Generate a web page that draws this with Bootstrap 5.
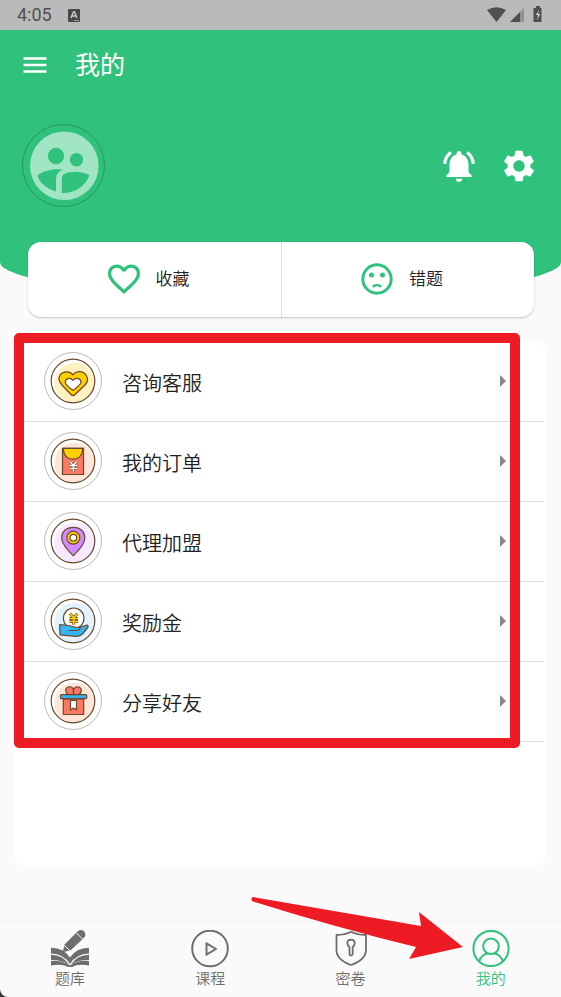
<!DOCTYPE html>
<html lang="zh-CN">
<head>
<meta charset="utf-8">
<meta name="viewport" content="width=device-width, initial-scale=1">
<title>我的</title>
<link href="https://cdn.jsdelivr.net/npm/bootstrap@5.3.0/dist/css/bootstrap.min.css" rel="stylesheet">
<style>
  :root { --brand: #30c27c; --ink: #222; --muted: #6e6e6e; --note: #ed1c24; }
  body { background: #33333b; color: var(--ink); font-family: Roboto, "Noto Sans CJK SC", sans-serif; }
  svg { display: block; flex: none; }
  .screen { background: #fafafa; border-bottom-left-radius: 8px; }
  .status-bar { background: #bababa; color: #505050; height: 30px; padding: 0 17px; font-size: 18px; line-height: 30px; }
  .hero { background: var(--brand); height: 267px; border-radius: 0 0 50% 50% / 0 0 35px 35px; }
  .toolbar { height: 70px; padding-left: 22px; gap: 27px; }
  .toolbar h1 { font-size: 25px; line-height: 36px; padding-top: 2px; }
  .profile { margin-top: 24px; padding: 0 23px 0 22px; }
  .profile-actions { gap: 22px; }
  .plain-btn { background: none; border: 0; padding: 0; color: #fff; }
  .shortcuts { margin: -55px 27px 0 28px; height: 75px; border-radius: 13px; box-shadow: 0 1px 2px rgba(0, 0, 0, .22); }
  .shortcuts a { gap: 16px; padding: 0 12px 2px 0; font-size: 17px; font-weight: 350; color: var(--ink); }
  .shortcuts span { padding-top: 3px; }
  .shortcuts a + a { border-left: 1px solid #dedede; }
  .shortcuts svg { color: var(--brand); }
  .menu-card { margin: 24px 14px 55px; border-radius: 14px; padding-top: 1px; }
  .menu-card .list-group { margin-right: 3px; }
  .menu-card .list-group-item { height: 80px; padding: 0 38px 2px 30px; gap: 20px; font-size: 20px; font-weight: 350; color: var(--ink); background: none; border-width: 0 0 1px; border-color: #dedede; }
  .menu-card .list-group-item:last-child { border-bottom-width: 1px; }
  .menu-label { padding-top: 6px; }
  .note-frame { position: absolute; inset: -9px 27px -6px 0; border: 10px solid var(--note); border-radius: 5px; pointer-events: none; z-index: 3; }
  .tab-bar { height: 76px; padding-top: 8px; border-top: 1px solid #f0f0f0; }
  .tab-bar a { font-size: 15px; line-height: 22px; font-weight: 350; color: var(--muted); }
  .tab-bar a.active { color: var(--brand); }
  .note-arrow { position: absolute; right: 98px; bottom: 36px; pointer-events: none; }
</style>
<script src="https://cdn.jsdelivr.net/npm/bootstrap@5.3.0/dist/js/bootstrap.bundle.min.js"></script>
</head>
<body>
<div class="screen min-vh-100 d-flex flex-column">
  <div class="status-bar d-flex align-items-center">
    <span>4:05</span>
    <svg class="ms-3" width="12" height="13" viewBox="0 0 12 13"><rect width="12" height="13" rx="1" fill="#484848"/><path d="M3 9 5.4 3h1.2L9 9M4 7h4" fill="none" stroke="#ccc" stroke-width="1.4"/><path d="M6 11.5h5" stroke="#999"/></svg>
    <svg class="ms-auto" width="57" height="18" viewBox="0 0 57 18" fill="#505050"><path d="M0 4Q9.500-1.500 19 4L9.500 16Z"/><path d="M37 2v14H23Z" fill="#929292"/><path d="M33 6v10H23Z"/><path d="M49 0h4v2h1.500v14h-8V2H49Z"/><path d="M52 4l-3 5h2l-1 5 3-6h-2Z" fill="#ddd"/></svg>
  </div>

  <header class="hero">
    <div class="toolbar d-flex align-items-center">
      <button class="plain-btn" type="button" aria-label="菜单"><svg width="26" height="18" viewBox="0 0 26 18"><path d="M1.500 2.500h23M1.500 9h23M1.500 15.500h23" stroke="currentColor" stroke-width="2.300"/></svg></button>
      <h1 class="m-0 fw-normal text-white">我的</h1>
    </div>
    <div class="profile d-flex align-items-center justify-content-between">
      <button class="plain-btn" type="button" aria-label="头像">
        <svg width="83" height="83" viewBox="0 0 83 83"><circle cx="41.500" cy="41.500" r="41" fill="none" stroke="#228b59" stroke-width=".8"/><circle cx="42.300" cy="41.800" r="34.300" fill="#a2e5c5"/><g fill="#30c27c"><circle cx="34" cy="32" r="8.200"/><circle cx="54.500" cy="35.700" r="6.700"/><path d="M15.500 51.500C20 46.500 35 44 41 45.800C36 47.500 34 51 34 56V67.600C24 64.500 17 58 15.500 51.500Z"/><path d="M39.800 69V55C39.800 50 43 48 54 47.700C60 48 64 49.500 67.500 51C64 61 54 69.500 39.800 69Z"/></g></svg>
      </button>
      <div class="profile-actions d-flex">
        <button class="plain-btn" type="button" aria-label="通知"><svg width="38" height="38" viewBox="0 0 24 24" fill="currentColor"><path d="M7.580 4.080L6.150 2.650C3.750 4.480 2.170 7.300 2.030 10.500h2c.15-2.650 1.510-4.970 3.550-6.420zm12.390 6.420h2c-.15-3.200-1.730-6.020-4.120-7.850l-1.420 1.430c2.020 1.450 3.390 3.770 3.540 6.420zM18 11c0-3.070-1.640-5.640-4.500-6.320V4c0-.83-.67-1.500-1.500-1.500s-1.500.67-1.500 1.500v.68C7.630 5.360 6 7.920 6 11v5l-2 2v1h16v-1l-2-2v-5zm-6 11c.14 0 .27-.01.4-.04.65-.14 1.180-.58 1.440-1.180.1-.24.15-.5.15-.78h-4c.01 1.100.9 2 2.010 2z"/></svg></button>
        <button class="plain-btn" type="button" aria-label="设置"><svg width="38" height="38" viewBox="0 0 24 24" fill="currentColor"><path d="M19.140 12.940c.04-.3.06-.61.06-.94 0-.32-.02-.64-.07-.94l2.030-1.580c.18-.14.23-.41.12-.61l-1.920-3.320c-.12-.22-.37-.29-.59-.22l-2.390.96c-.5-.38-1.030-.7-1.620-.94l-.36-2.540c-.04-.24-.24-.41-.48-.41h-3.840c-.24 0-.43.17-.47.41l-.36 2.540c-.59.24-1.130.57-1.620.94l-2.390-.96c-.22-.08-.47 0-.59.22L2.740 8.870c-.12.21-.08.47.12.61l2.030 1.580c-.05.3-.09.63-.09.94s.02.64.07.94l-2.030 1.580c-.18.14-.23.41-.12.61l1.920 3.320c.12.22.37.29.59.22l2.390-.96c.5.38 1.030.7 1.620.94l.36 2.540c.05.24.24.41.48.41h3.840c.24 0 .44-.17.47-.41l.36-2.540c.59-.24 1.130-.56 1.620-.94l2.390.96c.22.08.47 0 .59-.22l1.920-3.320c.12-.22.07-.47-.12-.61l-2.010-1.580zM12 15.600c-1.980 0-3.600-1.620-3.600-3.600s1.620-3.600 3.600-3.600 3.600 1.620 3.600 3.600-1.620 3.600-3.600 3.600z"/></svg></button>
      </div>
    </div>
  </header>

  <nav class="shortcuts d-flex bg-white" aria-label="快捷入口">
    <a href="#fav" class="flex-fill w-50 d-flex align-items-center justify-content-center text-decoration-none">
      <svg width="32" height="32" viewBox="2 2 20 20" fill="currentColor"><path d="M16.500 3c-1.740 0-3.410.81-4.500 2.090C10.910 3.810 9.240 3 7.500 3 4.420 3 2 5.420 2 8.500c0 3.780 3.400 6.860 8.550 11.540L12 21.350l1.450-1.320C18.600 15.360 22 12.280 22 8.500 22 5.420 19.580 3 16.500 3zm-4.400 15.550l-.1.1-.1-.1C7.140 14.240 4 11.390 4 8.500 4 6.500 5.500 5 7.500 5c1.540 0 3.040.99 3.570 2.360h1.870C13.460 5.990 14.960 5 16.500 5c2 0 3.500 1.500 3.500 3.500 0 2.890-3.140 5.740-7.900 10.050z"/></svg>
      <span>收藏</span>
    </a>
    <a href="#wrong" class="flex-fill w-50 d-flex align-items-center justify-content-center text-decoration-none">
      <svg width="32" height="32" viewBox="0 0 32 32"><circle cx="16" cy="16" r="14.200" fill="none" stroke="currentColor" stroke-width="3"/><circle cx="10.500" cy="12" r="2.500" fill="currentColor"/><circle cx="21.500" cy="12" r="2.500" fill="currentColor"/><path d="M12.500 23.200Q16 21 19.500 23.200" fill="none" stroke="currentColor" stroke-width="2.400" stroke-linecap="round"/></svg>
      <span>错题</span>
    </a>
  </nav>

  <main class="menu-card bg-white flex-grow-1">
    <div class="position-relative">
      <div class="list-group list-group-flush">
        <a href="#service" class="list-group-item d-flex align-items-center">
          <svg width="58" height="58" viewBox="0 0 58 58"><circle cx="29" cy="29" r="28.500" fill="none" stroke="#999" stroke-width=".7"/><circle cx="30.500" cy="30.700" r="20" fill="#fff1c1"/><g stroke="#67492c" stroke-width="1.200" stroke-linejoin="round"><circle cx="29" cy="29" r="21.800" fill="none"/><path d="M29 23C26 18.500 19 19 16 23C14 27 15 30 18 33L27 42.500Q29 44.500 31 42.500L41 33C44 30 44 26 42 23C39 18.500 32 18.500 29 23Z" fill="#ffd000"/><path d="M29 28.300C26 24.500 21 27 21.300 30.500C21.500 33 25 35.500 29 38.500C33 35.500 36.500 33 37 30.500C37.500 27 32 24.500 29 28.300Z" fill="#fff"/></g></svg>
          <span class="menu-label">咨询客服</span>
          <svg class="ms-auto" width="6" height="12" viewBox="0 0 6 12"><path d="M0 0 6 6 0 12Z" fill="#888"/></svg>
        </a>
        <a href="#orders" class="list-group-item d-flex align-items-center">
          <svg width="58" height="58" viewBox="0 0 58 58"><circle cx="29" cy="29" r="28.500" fill="none" stroke="#999" stroke-width=".7"/><circle cx="30.500" cy="30.700" r="20" fill="#ffe5d8"/><g stroke="#67492c" stroke-width="1.200"><circle cx="29" cy="29" r="21.800" fill="none"/><path d="M18.500 16.300h21v26.200h-21Z" fill="#fa7864"/><path d="M19.500 16.300h19v2.500C37.500 30 20.500 30 19.500 18.800Z" fill="#ffd000"/></g><g fill="none"><path d="M26 29.500l3.300 4 3.300-4M25.500 33.500h7.600M25.500 36.300h7.600M29.300 33.500V39.500" stroke="#67492c" stroke-width="2.400"/><path d="M26 29.500l3.300 4 3.300-4M25.500 33.500h7.600M25.500 36.300h7.600M29.300 33.500V39.500" stroke="#fff" stroke-width="1.300"/></g></svg>
          <span class="menu-label">我的订单</span>
          <svg class="ms-auto" width="6" height="12" viewBox="0 0 6 12"><path d="M0 0 6 6 0 12Z" fill="#888"/></svg>
        </a>
        <a href="#agent" class="list-group-item d-flex align-items-center">
          <svg width="58" height="58" viewBox="0 0 58 58"><circle cx="29" cy="29" r="28.500" fill="none" stroke="#999" stroke-width=".7"/><circle cx="30.500" cy="30.700" r="20" fill="#f8e8ff"/><g stroke="#67492c" stroke-width="1.200" stroke-linejoin="round"><circle cx="29" cy="29" r="21.800" fill="none"/><path d="M29.300 43.800C25 39.500 18 33 17.700 26.500C17.500 19.500 22.500 15.300 29.300 15.300S41 19.500 40.800 26.500C40.500 33 33.500 39.500 29.300 43.800Z" fill="#d18aff"/><circle cx="29.300" cy="25.700" r="6.500" fill="#ffd000"/><circle cx="29.300" cy="25.700" r="3.300" fill="#fff"/></g></svg>
          <span class="menu-label">代理加盟</span>
          <svg class="ms-auto" width="6" height="12" viewBox="0 0 6 12"><path d="M0 0 6 6 0 12Z" fill="#888"/></svg>
        </a>
        <a href="#bonus" class="list-group-item d-flex align-items-center">
          <svg width="58" height="58" viewBox="0 0 58 58"><circle cx="29" cy="29" r="28.500" fill="none" stroke="#999" stroke-width=".7"/><circle cx="30.500" cy="30.700" r="20" fill="#e3f2ff"/><g stroke="#67492c" stroke-width="1.200" stroke-linejoin="round"><circle cx="29" cy="29" r="21.800" fill="none"/><circle cx="29.700" cy="26.300" r="10.300" fill="#fff"/><path d="M15.600 32.500L25 33.500Q29 35 35 35.500L43 33.200Q45 33.500 43.500 36L38.500 42Q36 44.500 32 44.300L16 42.800Z" fill="#35b4f5"/><path d="M24.500 38.500H32Q36 38.500 36.500 35.500" fill="none"/></g><g fill="none"><path d="M26 21.500l3.700 4.500 3.700-4.500M25.500 26.500h8.400M25.500 29.500h8.400M29.700 26V33" stroke="#67492c" stroke-width="2.800"/><path d="M26 21.500l3.700 4.500 3.700-4.500M25.500 26.500h8.400M25.500 29.500h8.400M29.700 26V33" stroke="#ffd000" stroke-width="1.600"/></g></svg>
          <span class="menu-label">奖励金</span>
          <svg class="ms-auto" width="6" height="12" viewBox="0 0 6 12"><path d="M0 0 6 6 0 12Z" fill="#888"/></svg>
        </a>
        <a href="#share" class="list-group-item d-flex align-items-center">
          <svg width="58" height="58" viewBox="0 0 58 58"><circle cx="29" cy="29" r="28.500" fill="none" stroke="#999" stroke-width=".7"/><circle cx="30.500" cy="30.700" r="20" fill="#ffe5d8"/><g stroke="#67492c" stroke-width="1.200" stroke-linejoin="round"><circle cx="29" cy="29" r="21.800" fill="none"/><path d="M29.500 17.500C28 13.500 22 14 21.700 18.300Q21.500 20.500 24 22.500H35Q37.500 20.500 37.300 18.300C37 14 31 13.500 29.500 17.500V22.500" fill="#fa7864"/><path d="M19.300 27h20.400v15.500H19.300Z" fill="#fa7864"/><rect x="16.500" y="22.700" width="26.200" height="4" rx="1" fill="#35b4f5"/><path d="M26.500 28.500h6V38l-3-2-3 2Z" fill="#fff"/></g></svg>
          <span class="menu-label">分享好友</span>
          <svg class="ms-auto" width="6" height="12" viewBox="0 0 6 12"><path d="M0 0 6 6 0 12Z" fill="#888"/></svg>
        </a>
      </div>
      <div class="note-frame" aria-hidden="true"></div>
    </div>
  </main>

  <nav class="tab-bar d-flex position-relative" aria-label="主导航">
    <a href="#bank" class="flex-fill w-25 d-flex flex-column align-items-center text-decoration-none">
      <svg width="38" height="38" viewBox="0 0 38 38" fill="currentColor"><path d="M0 17.700Q13 18 19 27.500Q25 18 38 17.700V23.500Q25 24 19 34Q13 24 0 23.500Z"/><path d="M0 24.700Q12 25 18 34.500Q10 29.500 0 30ZM38 24.700Q26 25 20 34.500Q28 29.500 38 30Z"/><path d="M0 31Q11 30 19 35.500Q27 30 38 31V35.500Q27 33.500 21 37H17Q11 33.500 0 35.500Z"/><path d="M11.800 22L13.500 14.500L27 1Q30-1 33 1.200Q35.300 4 33.700 7L19.500 20.500Z"/><path d="M13 15L19 21M25.500 3L31.500 9" stroke="#fafafa" stroke-width="1"/></svg>
      <span>题库</span>
    </a>
    <a href="#course" class="flex-fill w-25 d-flex flex-column align-items-center text-decoration-none">
      <svg width="38" height="38" viewBox="0 0 38 38" fill="none" stroke="currentColor" stroke-width="2" stroke-linejoin="round"><circle cx="19" cy="18.500" r="17.800"/><path d="M15.500 13.300L25 19L15.500 24.700Z"/></svg>
      <span>课程</span>
    </a>
    <a href="#papers" class="flex-fill w-25 d-flex flex-column align-items-center text-decoration-none">
      <svg width="38" height="38" viewBox="0 0 38 38" fill="none" stroke="currentColor" stroke-width="1.800" stroke-linejoin="round"><path d="M19 1.800Q25 5 34 5V20C34 28 26 32.500 19 35C12 32.500 4.500 28 4.500 20V5Q13 5 19 1.800Z"/><path d="M17.500 17Q15.300 15.500 15.300 13Q15.500 9.800 19 9.700Q22.700 9.800 22.800 13Q22.800 15.500 20.700 17V24Q20.500 25.500 19 25.500T17.500 24Z"/></svg>
      <span>密卷</span>
    </a>
    <a href="#me" class="active flex-fill w-25 d-flex flex-column align-items-center text-decoration-none" aria-current="page">
      <svg width="38" height="38" viewBox="0 0 38 38" fill="none" stroke="currentColor" stroke-width="2"><circle cx="19" cy="18.500" r="17.600"/><circle cx="19" cy="16.300" r="7.800"/><path d="M7 31.500Q10 24 15.500 23.500M31 31.500Q28 24 22.500 23.500"/></svg>
      <span>我的</span>
    </a>
    <svg class="note-arrow" width="212" height="64" viewBox="0 0 212 64" aria-hidden="true"><path d="M2 0L170 29L168 15L212 50L158 62L165 50Q80 29 1 4Q-.5 1 2 0Z" fill="#ed1c24"/></svg>
  </nav>
</div>
</body>
</html>
